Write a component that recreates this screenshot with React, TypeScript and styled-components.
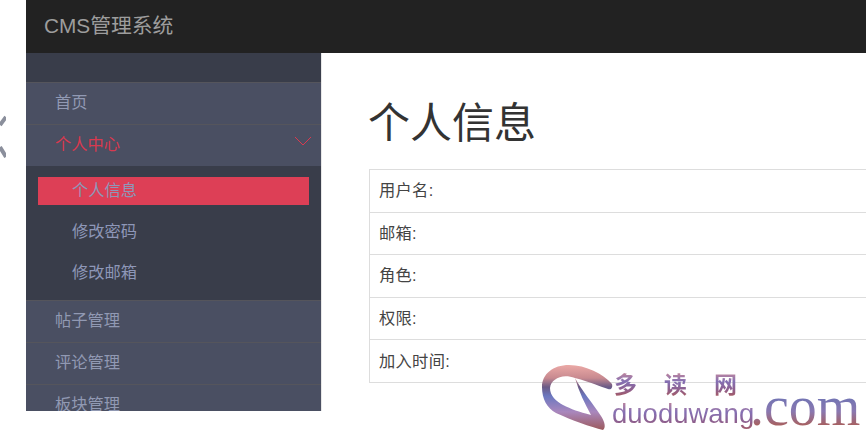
import React from "react";
import styled, { createGlobalStyle } from "styled-components";

const GlobalStyle = createGlobalStyle`
  html, body {
    margin: 0;
    padding: 0;
    background: #fff;
    overflow: hidden;
  }
  * {
    box-sizing: border-box;
  }
`;

const mainMenu = ["帖子管理", "评论管理", "板块管理"];
const subMenu = ["个人信息", "修改密码", "修改邮箱"];
const fields = ["用户名:", "邮箱:", "角色:", "权限:", "加入时间:"];

const App = () => {
  return (
    <Page>
      <GlobalStyle />
      <Frame>
        <Header>
          <Brand>CMS管理系统</Brand>
        </Header>
        <Body>
          <Sidebar>
            <SideTop />
            <MenuItem>首页</MenuItem>
            <MenuItem $active>
              个人中心
              <Chevron viewBox="0 0 18 10">
                <path d="M1 1 L9 9 L17 1" />
              </Chevron>
            </MenuItem>
            <SubMenu>
              {subMenu.map((name, i) => (
                <SubItem key={name} $active={i === 0}>
                  {name}
                </SubItem>
              ))}
            </SubMenu>
            {mainMenu.map((name) => (
              <MenuItem key={name}>{name}</MenuItem>
            ))}
          </Sidebar>
          <Main>
            <Title>个人信息</Title>
            <InfoTable>
              {fields.map((name) => (
                <InfoRow key={name}>{name}</InfoRow>
              ))}
            </InfoTable>
          </Main>
        </Body>
      </Frame>

      {/* edge of a chevron cut off at the left of the shot */}
      <EdgeMark viewBox="0 0 6 44">
        <path d="M6 2 L0 10 M0 32 L6 42" />
      </EdgeMark>

      <Watermark>
        <Swoosh viewBox="0 0 76 68">
          <defs>
            <linearGradient id="swoosh" x1="0" y1="0" x2="0" y2="1">
              <stop offset="0" stopColor="#eba9a6" />
              <stop offset="0.2" stopColor="#c88a90" />
              <stop offset="0.34" stopColor="#6a5a86" />
              <stop offset="0.48" stopColor="#6b78c0" />
              <stop offset="0.72" stopColor="#a987bd" />
              <stop offset="1" stopColor="#9c5a5c" />
            </linearGradient>
          </defs>
          <path
            d="M1 23 C1 10 12 1 28 1 C45 1 62 10 71 20 C72 24 70 26 67 25 C60 23 50 18 34 14 C21 9 10 15 9 24 C9 32 15 37 22 41 C30 45 38 48 50 51 C44 40 38 28 34 14 C40 25 52 40 60 52 C64 58 65 64 62 66 C50 63 30 56 15 49 C6 44 1 35 1 23 Z"
            fill="url(#swoosh)"
          />
        </Swoosh>
        <WatermarkCn>
          <span>多</span>
          <span>读</span>
          <span>网</span>
        </WatermarkCn>
        <WatermarkDomain>duoduwang</WatermarkDomain>
        <WatermarkCom>.com</WatermarkCom>
      </Watermark>
    </Page>
  );
};

export default App;

const cjk = `"Liberation Sans", "Noto Sans CJK SC", sans-serif`;

const Page = styled.div`
  width: 866px;
  height: 437px;
  padding-left: 26px;
  position: relative;
  overflow: hidden;
  font-family: ${cjk};
`;

const Frame = styled.div`
  height: 411px;
  display: flex;
  flex-direction: column;
  overflow: hidden;
`;

const Header = styled.div`
  height: 53px;
  flex-shrink: 0;
  background: #222222;
  display: flex;
  align-items: center;
  padding: 0 0 6px 18px;
`;

const Brand = styled.div`
  font-size: 20.8px;
  color: #9d9d9d;
`;

const Body = styled.div`
  flex: 1;
  display: flex;
  min-height: 0;
`;

const Sidebar = styled.div`
  width: 296px;
  flex-shrink: 0;
  background: #393d4a;
  border-right: 1px solid #e7e7e7;
  overflow: hidden;
`;

const SideTop = styled.div`
  height: 29px;
`;

const MenuItem = styled.div<{ $active?: boolean }>`
  height: 42px;
  background: #4a4f62;
  border-top: 1px solid #55555c;
  padding: 0 0 5px 29px;
  display: flex;
  align-items: center;
  position: relative;
  font-size: 16.25px;
  color: ${(p) => (p.$active ? "#d9394f" : "#9199b3")};
`;

const Chevron = styled.svg`
  position: absolute;
  right: 9px;
  top: 11px;
  width: 18px;
  height: 10px;
  fill: none;
  stroke: #d9394f;
  stroke-width: 1;
`;

const SubMenu = styled.div`
  height: 134px;
  padding: 11px 12px 0;
`;

const SubItem = styled.div<{ $active?: boolean }>`
  height: 28px;
  margin-bottom: 13px;
  padding: 0 0 4px 34px;
  display: flex;
  align-items: center;
  font-size: 16.25px;
  color: #8e97b8;
  background: ${(p) => (p.$active ? "#dd3f56" : "transparent")};
`;

const Main = styled.div`
  flex: 1;
  min-width: 0;
  padding: 46px 0 0 47px;
  background: #fff;
`;

const Title = styled.h1`
  margin: -1px 0 19px -1px;
  font-size: 42px;
  font-weight: 400;
  line-height: 52px;
  color: #333;
  font-family: ${cjk};
`;

const InfoTable = styled.div`
  width: 560px;
  border: 1px solid #ddd;
  border-bottom: none;
`;

const InfoRow = styled.div`
  height: 42.6px;
  padding: 0 0 3px 9px;
  border-bottom: 1px solid #ddd;
  display: flex;
  align-items: center;
  font-size: 16.25px;
  letter-spacing: 0.3px;
  color: #444;
`;

const EdgeMark = styled.svg`
  position: absolute;
  left: 0;
  top: 115px;
  width: 6px;
  height: 44px;
  fill: none;
  stroke: #8b8f9c;
  stroke-width: 4;
`;

const Watermark = styled.div`
  position: absolute;
  left: 541px;
  top: 364px;
  width: 325px;
  height: 73px;
`;

const Swoosh = styled.svg`
  position: absolute;
  left: 0;
  top: 0;
  width: 76px;
  height: 68px;
`;

const gradientText = `
  background: linear-gradient(180deg, #d98f92 0%, #8470b4 45%, #8f5f8c 75%, #a85a60 100%);
  -webkit-background-clip: text;
  background-clip: text;
  color: transparent;
`;

const WatermarkCn = styled.div`
  position: absolute;
  left: 73px;
  top: 5px;
  width: 123px;
  display: flex;
  justify-content: space-between;
  font-family: "Noto Sans CJK SC", serif;
  font-size: 23px;
  font-weight: 700;
  line-height: 28px;
  span {
    ${gradientText}
  }
`;

const WatermarkDomain = styled.div`
  position: absolute;
  left: 71px;
  top: 33px;
  font-size: 27.5px;
  line-height: 34px;
  ${gradientText}
`;

const WatermarkCom = styled.div`
  position: absolute;
  left: 209px;
  top: 14px;
  font-family: "Liberation Serif", serif;
  font-size: 56px;
  line-height: 56px;
  background: linear-gradient(180deg, #6d74b4 30%, #8a78b0 60%, #a8605f 85%);
  -webkit-background-clip: text;
  background-clip: text;
  color: transparent;
`;
